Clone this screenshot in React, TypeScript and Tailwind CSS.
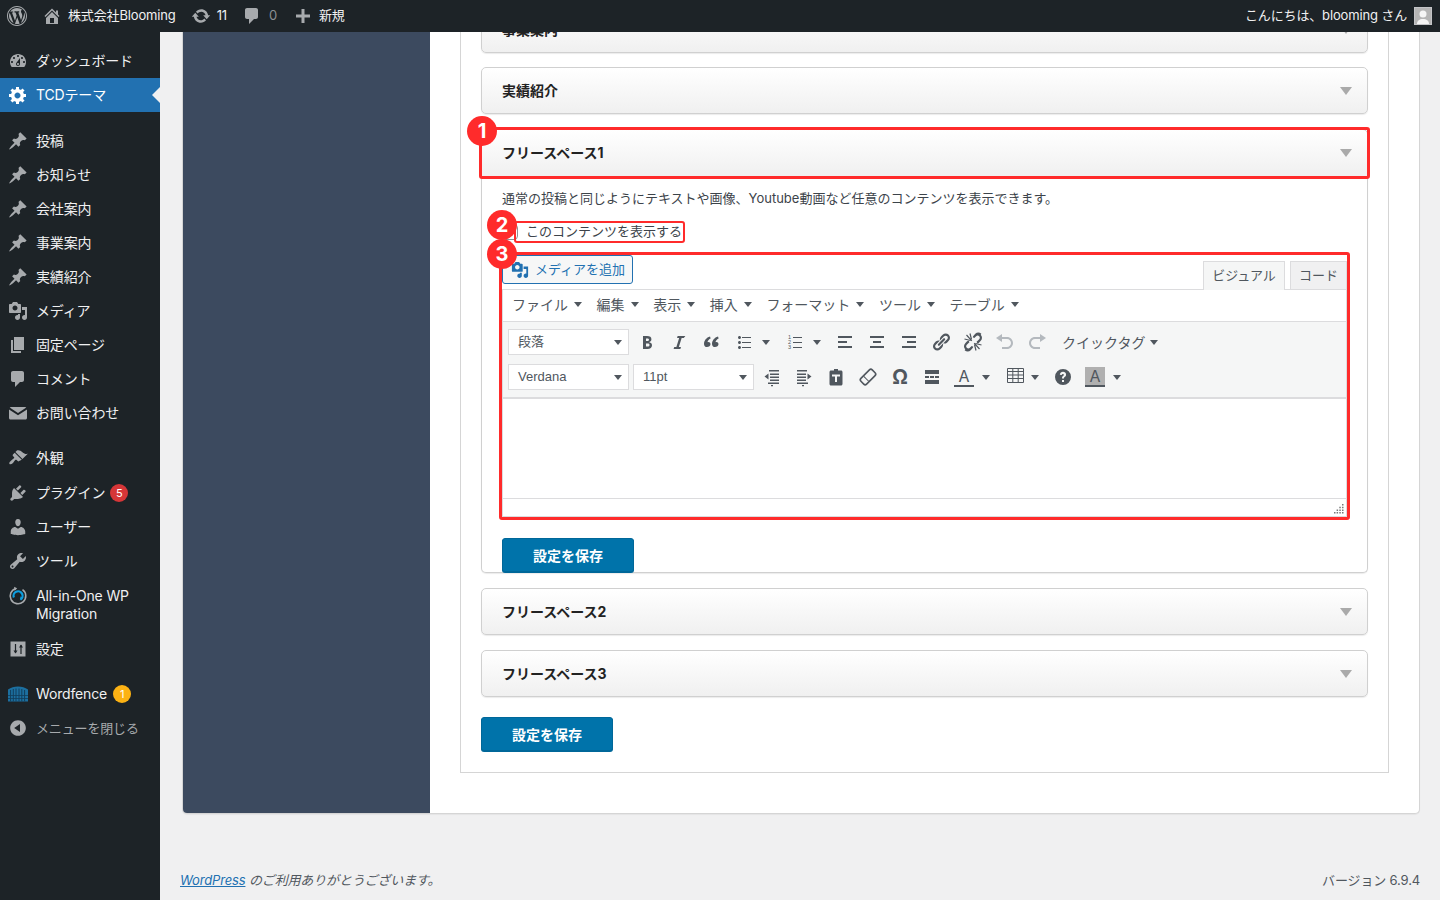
import type { ReactNode } from "react";

const paths = {
  logo: "M20 10c0-5.52-4.48-10-10-10S0 4.48 0 10s4.48 10 10 10 10-4.48 10-10zM10 1.01c4.97 0 8.99 4.02 8.99 8.99s-4.02 8.99-8.99 8.99S1.01 14.97 1.01 10 5.03 1.01 10 1.01zM8.01 14.82L4.96 6.61c.49-.03 1.05-.08 1.05-.08.43-.05.38-1.01-.06-.99 0 0-1.29.1-2.13.1-.15 0-.33 0-.52-.01 1.44-2.17 3.9-3.6 6.7-3.6 2.09 0 3.99.79 5.41 2.09-.6-.08-1.45.35-1.45 1.42 0 .66.38 1.22.79 1.88.31.54.5 1.22.5 2.21 0 1.34-1.27 4.48-1.27 4.48l-2.71-7.5c.48-.03.75-.16.75-.16.43-.05.38-1.1-.05-1.08 0 0-1.3.11-2.14.11-.78 0-2.11-.11-2.11-.11-.43-.02-.48 1.06-.05 1.08l.84.08 1.12 3.04zm6.02 2.15L16.64 10s.67-1.69.39-3.81c.63 1.14.94 2.42.94 3.81 0 2.96-1.56 5.58-3.94 6.97zM2.68 6.77L6.5 16.96C3.81 15.66 2.01 12.91 2.01 10c0-1.16.2-2.24.67-3.23zm7.56 4.53l2.3 6.26c.01.04.03.08.05.11-.78.27-1.62.43-2.5.43-.74 0-1.46-.11-2.14-.32z",
  home: "M16 8.5l1.53 1.53-1.06 1.06L10 4.62l-6.47 6.47-1.06-1.06L10 2.5l4 4v-2h2v4zm-6-2.46l6 5.99V18H4v-5.97zM12 17v-5H8v5h4z",
  update: "M10.2 3.28c3.53 0 6.43 2.61 6.92 6h2.08l-3.5 4-3.5-4h2.32c-.45-1.97-2.21-3.45-4.32-3.45-1.45 0-2.73.71-3.54 1.78L4.95 5.66C6.23 4.2 8.11 3.28 10.2 3.28zm-.4 13.44c-3.52 0-6.43-2.61-6.92-6H.8l3.5-4c1.17 1.33 2.33 2.67 3.5 4H5.48c.45 1.97 2.21 3.45 4.32 3.45 1.45 0 2.73-.71 3.54-1.78l1.71 1.95c-1.28 1.46-3.15 2.38-5.25 2.38z",
  comment: "M5 2h9c1.1 0 2 .9 2 2v7c0 1.1-.9 2-2 2h-2l-5 5v-5H5c-1.1 0-2-.9-2-2V4c0-1.1.9-2 2-2z",
  plus: "M8.5 3h3v5.5H17v3h-5.5V17h-3v-5.5H3v-3h5.5z",
  dashboard: "M3.76 16h12.48c1.1-1.37 1.76-3.11 1.76-5 0-4.42-3.58-8-8-8s-8 3.58-8 8c0 1.89.66 3.63 1.76 5zM10 4c.55 0 1 .45 1 1s-.45 1-1 1-1-.45-1-1 .45-1 1-1zM6 6c.55 0 1 .45 1 1s-.45 1-1 1-1-.45-1-1 .45-1 1-1zm8 0c.55 0 1 .45 1 1s-.45 1-1 1-1-.45-1-1 .45-1 1-1zm-5.37 5.55L12 7v6c0 1.1-.9 2-2 2s-2-.9-2-2c0-.57.24-1.08.63-1.45zM4 10c.55 0 1 .45 1 1s-.45 1-1 1-1-.45-1-1 .45-1 1-1zm12 0c.55 0 1 .45 1 1s-.45 1-1 1-1-.45-1-1 .45-1 1-1zm-5 3c0-.55-.45-1-1-1s-1 .45-1 1 .45 1 1 1 1-.45 1-1z",
  gear: "M18 12h-2.18c-.17.7-.44 1.35-.81 1.93l1.54 1.54-2.1 2.1-1.54-1.54c-.58.36-1.23.63-1.91.79V19H8v-2.18c-.68-.16-1.33-.43-1.91-.79l-1.54 1.54-2.12-2.12 1.54-1.54c-.36-.58-.63-1.23-.79-1.91H1V9.03h2.17c.16-.7.44-1.35.8-1.94L2.43 5.55l2.1-2.1 1.54 1.54c.58-.37 1.24-.64 1.93-.81V2h3v2.18c.68.16 1.33.43 1.91.79l1.54-1.54 2.12 2.12-1.54 1.54c.36.59.64 1.24.8 1.94H18V12zm-8.5 1.5c1.66 0 3-1.34 3-3s-1.34-3-3-3-3 1.34-3 3 1.34 3 3 3z",
  pin: "M10.44 3.02l1.82-1.82 6.36 6.35-1.83 1.82c-1.05-.68-2.48-.57-3.41.36l-.75.75c-.92.93-1.04 2.35-.35 3.41l-1.83 1.82-2.41-2.41-2.8 2.79c-.42.42-3.38 2.71-3.8 2.29s1.86-3.39 2.28-3.81l2.79-2.79L4.1 9.36l1.83-1.82c1.05.69 2.48.57 3.4-.36l.75-.75c.93-.92 1.05-2.35.36-3.41z",
  media: "M13 11V4c0-.55-.45-1-1-1h-1.67L9 1H5L3.67 3H2c-.55 0-1 .45-1 1v7c0 .55.45 1 1 1h10c.55 0 1-.45 1-1zM7 4.5c1.38 0 2.5 1.12 2.5 2.5S8.38 9.5 7 9.5 4.5 8.38 4.5 7 5.62 4.5 7 4.5zM14 6h5v10.5c0 1.38-1.12 2.5-2.5 2.5S14 17.88 14 16.5s1.12-2.5 2.5-2.5c.17 0 .34.02.5.05V9h-3V6zm-4 8.05V13h2v3.5c0 1.38-1.12 2.5-2.5 2.5S7 17.88 7 16.5 8.12 14 9.5 14c.17 0 .34.02.5.05z",
  page: "M6 15V2h10v13H6zm-1 1h8v2H3V5h2v11z",
  mail: "M3 4h14c.6 0 1 .2 1.300.6L10 10 1.700 4.600C2 4.200 2.400 4 3 4zM1 6.500l9 5.800 9-5.800V15c0 .8-.7 1.500-1.500 1.500h-15C1.700 16.500 1 15.800 1 15z",
  brush: "M14.48 11.06L7.41 3.99l1.5-1.5c.5-.56 2.3-.47 3.51.32 1.21.8 1.43 1.28 2.91 2.1 1.18.64 2.45 1.26 4.45.85zm-.71.71L6.7 4.7 4.93 6.47c-.39.39-.39 1.02 0 1.41l1.06 1.06c.39.39.39 1.03 0 1.42-.6.6-1.43 1.11-2.21 1.69-.35.26-.7.53-1.01.84C1.43 13.71.96 15.12 1.5 15.89c.52.73 2.1.43 3.2-.64.31-.31.58-.66.84-1.01.58-.78 1.09-1.61 1.69-2.21.39-.39 1.02-.39 1.41 0l1.06 1.06c.39.39 1.02.39 1.41 0z",
  plugin: "M13.11 4.36L9.87 7.6 8 5.73l3.24-3.24c.35-.34 1.05-.2 1.56.32.52.51.66 1.21.31 1.55zm-8 1.77l.91-1.12 9.01 9.01-1.19.84c-.71.71-2.63 1.16-3.82 1.16H6.14L4.9 17.26c-.59.59-1.54.59-2.12 0-.59-.58-.59-1.53 0-2.12l1.24-1.24v-3.88c0-1.13.4-3.19 1.09-3.89zm7.26 3.97l3.24-3.24c.34-.35 1.04-.21 1.55.31.52.51.66 1.21.31 1.55l-3.24 3.25z",
  users: "M10 9.25c-2.27 0-2.73-3.44-2.73-3.44C7 4.02 7.82 2 9.97 2c2.16 0 2.98 2.02 2.71 3.81 0 0-.41 3.44-2.68 3.44zm0 2.57L12.72 10c2.39 0 4.52 2.33 4.52 4.53v2.49s-3.65 1.13-7.24 1.13c-3.65 0-7.24-1.13-7.24-1.13v-2.49c0-2.25 1.94-4.48 4.47-4.48z",
  tools: "M16.68 9.77c-1.34 1.34-3.3 1.67-4.95.99l-5.41 6.52c-.99.99-2.59.99-3.58 0s-.99-2.59 0-3.57l6.52-5.42c-.68-1.65-.35-3.61.99-4.95 1.28-1.28 3.12-1.62 4.72-1.06l-2.89 2.89 2.82 2.82 2.86-2.87c.53 1.58.18 3.39-1.08 4.65zM3.81 16.21c.4.39 1.04.39 1.43 0 .4-.4.4-1.04 0-1.43-.39-.4-1.03-.4-1.43 0-.39.39-.39 1.03 0 1.43z",
  collapse: "M10 2.16c4.33 0 7.84 3.51 7.84 7.84s-3.51 7.84-7.84 7.84S2.16 14.33 2.16 10C2.16 5.71 5.71 2.16 10 2.16zm2 11.72V6.12L6.18 9.97z",
  bold: "M6 4v13h4.54c1.37 0 2.46-.33 3.26-1 .8-.66 1.2-1.58 1.2-2.77 0-.84-.23-1.51-.68-2.01-.45-.5-1.12-.84-2.01-1.01v-.13c.73-.17 1.27-.5 1.6-1 .33-.49.5-1.11.5-1.86 0-1.06-.36-1.88-1.08-2.42C12.61 4.27 11.49 4 10 4H6zm3 5V6.5h1c1.3 0 2 .39 2 1.21 0 .86-.68 1.29-2 1.29H9zm0 5.5v-3h1.5c1.4 0 2 .5 2 1.46 0 1.04-.65 1.54-2 1.54H9z",
  italic: "M14.78 6h-2.13l-2.8 9h2.12l-.62 2H4.6l.62-2h2.14l2.8-9H8.03l.62-2h7.75z",
  quote: "M9.49 12.22c0-1.24-.88-2.18-2.23-2.18-.38 0-.6.04-.8.1.32-1.46 1.72-3.04 3.19-3.65L9.01 4.500C5.440 5.500 3 8.600 3 11.930 3 14 4.270 15 5.920 15c2.060 0 3.570-1.220 3.570-2.780zm8 0c0-1.240-.880-2.180-2.230-2.180-.380 0-.6.040-.8.1.320-1.460 1.720-3.040 3.190-3.650L17.010 4.500C13.440 5.500 11 8.600 11 11.930 11 14 12.270 15 13.920 15c2.060 0 3.570-1.220 3.570-2.780z",
  ul: "M5.5 7C4.67 7 4 6.33 4 5.5 4 4.68 4.67 4 5.5 4 6.32 4 7 4.68 7 5.5 7 6.33 6.32 7 5.5 7zM8 5h9v1H8V5zm-2.5 7c-.83 0-1.5-.67-1.5-1.5C4 9.68 4.67 9 5.5 9c.82 0 1.5.68 1.5 1.5 0 .83-.68 1.5-1.5 1.5zM8 10h9v1H8v-1zm-2.5 7c-.83 0-1.5-.67-1.5-1.5 0-.82.67-1.5 1.5-1.5.82 0 1.5.68 1.5 1.5 0 .83-.68 1.5-1.5 1.5zM8 15h9v1H8v-1z",
  alignLeft: "M3 4h14v2H3zM3 9h9v2H3zM3 14h14v2H3z",
  alignCenter: "M3 4h14v2H3zM6 9h8v2H6zM3 14h14v2H3z",
  alignRight: "M3 4h14v2H3zM8 9h9v2H8zM3 14h14v2H3z",
  link: "M17.74 2.76c1.68 1.69 1.68 4.41 0 6.1l-1.53 1.52c-1.12 1.12-2.7 1.47-4.14 1.09l2.62-2.61.76-.77.76-.76c.84-.84.84-2.2 0-3.04-.84-.85-2.2-.85-3.04 0l-.77.76-3.38 3.38c-.37-1.44-.02-3.02 1.1-4.14l1.52-1.53c1.69-1.68 4.42-1.68 6.1 0zM8.59 13.43l5.34-5.34c.42-.42.42-1.1 0-1.52-.44-.43-1.13-.39-1.53 0l-5.33 5.34c-.42.42-.42 1.1 0 1.52.44.43 1.13.39 1.52 0zm-.76 2.29l4.14-4.15c.38 1.44.03 3.02-1.09 4.14l-1.52 1.53c-1.69 1.68-4.41 1.68-6.1 0-1.68-1.68-1.68-4.42 0-6.1l1.53-1.52c1.12-1.12 2.7-1.47 4.14-1.1l-4.14 4.15c-.85.84-.85 2.2 0 3.05.84.84 2.2.84 3.04 0z",
  unlink: "M17.74 2.76c1.68 1.69 1.68 4.41 0 6.1l-1.53 1.52c-.5.5-1.1.85-1.75 1.03l-.9-1.55 1.1-1.1.76-.77.76-.76c.84-.84.84-2.2 0-3.04-.84-.85-2.2-.85-3.04 0l-.77.76-1.1 1.1-1.55-.9c.18-.65.53-1.25 1.03-1.75l1.52-1.53c1.69-1.68 4.42-1.68 6.1 0zM2.26 17.24c-1.68-1.68-1.68-4.42 0-6.1l1.53-1.52c.5-.5 1.1-.85 1.75-1.03l.9 1.55-1.1 1.1-.76.77-.76.76c-.84.84-.84 2.2 0 3.04.84.85 2.2.85 3.04 0l.77-.76 1.1-1.1 1.55.9c-.18.65-.53 1.25-1.03 1.75l-1.52 1.53c-1.69 1.68-4.42 1.68-6.1 0z",
  undo: "M12 5H7V2L1 6l6 4V7h5c2.2 0 4 1.8 4 4s-1.8 4-4 4H7v2h5c3.3 0 6-2.7 6-6s-2.7-6-6-6z",
  redo: "M8 5h5V2l6 4-6 4V7H8c-2.2 0-4 1.8-4 4s1.8 4 4 4h5v2H8c-3.3 0-6-2.7-6-6s2.7-6 6-6z",
  outdent: "M7 3h10v1.600H7zM2.500 9.500L6.500 6.500v6zM8 6.500h9V8H8zM8 9.500h9V11H8zM8 12.500h9V14H8zM6 15.500h11v1.500H6zM9 18h2v1.200H9z",
  indent: "M3 3h10v1.600H3zM17.500 9.500L13.500 6.500v6zM3 6.500h9V8H3zM3 9.500h9V11H3zM3 12.500h9V14H3zM3 15.500h11v1.500H3zM8 18h2v1.200H8z",
  paste: "M12 2v1.500h3c.8 0 1.500.7 1.500 1.500v12c0 .8-.7 1.500-1.500 1.500H5c-.8 0-1.500-.7-1.500-1.500V5c0-.8.7-1.500 1.500-1.500h3V2zM6 7.500v2h3V15h2V9.500h3v-2z",
  hr: "M3 3h14v4H3zM3 9h4v2H3zM8 9h4v2H8zM13 9h4v2h-4zM3 13h14v4H3z",
  help: "M10 2a8 8 0 1 0 0 16 8 8 0 0 0 0-16zm1 13H9v-2h2zm1.900-6.300c-.3.5-.8.900-1.300 1.300-.4.300-.6.500-.6 1v.5H9v-.7c0-.9.4-1.400 1-1.800.5-.4.9-.7.900-1.200 0-.5-.4-.8-1-.8-.7 0-1.100.4-1.200 1.100l-1.900-.3C7.100 5.700 8.300 4.800 10 4.800c1.800 0 3 1 3 2.500 0 .5 0 1-.1 1.400z",
};

type IconName = keyof typeof paths;

function Dash({ name, size = 20, className = "" }: { name: IconName; size?: number; className?: string }) {
  return (
    <svg className={`block shrink-0 ${className}`} width={size} height={size} viewBox="0 0 20 20" fill="currentColor">
      <path d={paths[name]} />
    </svg>
  );
}

function Caret({ className = "text-[#50575e]" }: { className?: string }) {
  return (
    <svg className={`block shrink-0 ${className}`} width="8" height="5" viewBox="0 0 8 5" fill="currentColor">
      <path d="M0 0h8L4 5z" />
    </svg>
  );
}

function MigrationIcon() {
  return (
    <svg width="20" height="20" viewBox="0 0 20 20" fill="none" className="block shrink-0">
      <path d="M8 2.400A7.800 7.800 0 1 0 14.500 3.600" stroke="#a7aaad" strokeWidth="1.600" />
      <path d="M6 .8l3.200 1.500L6.600 4.700z" fill="#a7aaad" />
      <path d="M5.900 11.500A4.500 4.500 0 1 1 12.400 13.600" stroke="#0e9fe0" strokeWidth="2.200" />
      <path d="M12.300 10.400l3.200 1.200-3 2.400z" fill="#0e9fe0" />
    </svg>
  );
}

function FenceIcon() {
  return (
    <svg width="20" height="16" viewBox="0 0 20 16" className="block shrink-0">
      <path d="M0 3.500C3 1.500 6 .5 10 .5s7 1 10 3V15.500H0z" fill="#1c6f9f" />
      <path d="M2.600 4v11.500M5.300 3v12.500M8 2.500v13M11 2.500v13M13.800 3v12.500M16.600 4v11.500" stroke="#123f5c" strokeWidth="1" />
      <path d="M0 9.500h20M0 12.500h20" stroke="#123f5c" strokeWidth=".8" />
    </svg>
  );
}

function SettingsIcon() {
  return (
    <svg width="20" height="20" viewBox="0 0 20 20" className="block shrink-0">
      <path d="M2.500 2.500h15v15h-15z" fill="#a7aaad" />
      <path d="M7.500 5v9M13 6v9" stroke="#1d2327" strokeWidth="1.200" />
      <path d="M5.500 11.500h4l-2 3zM11 8.500h4l-2-3z" fill="#1d2327" />
    </svg>
  );
}

function UnlinkIcon() {
  return (
    <svg width="20" height="20" viewBox="0 0 20 20" fill="currentColor" className="block shrink-0">
      <path d={paths.unlink} />
      <path d="M8.800 8.800L3.500 3M8.500 7.500L7 1.500M7.500 8.500L1.500 7M11.200 11.200L16.500 17M11.500 12.500L13 18.500M12.500 11.500L18.500 13" stroke="currentColor" strokeWidth="1.200" fill="none" />
    </svg>
  );
}

function EraserIcon() {
  return (
    <svg width="20" height="20" viewBox="0 0 20 20" fill="none" stroke="currentColor" className="block shrink-0">
      <g transform="rotate(-45 10 10)">
        <rect x="2" y="6" width="16" height="8" rx="2" strokeWidth="1.600" />
        <path d="M7.500 6.500v7" strokeWidth="1" />
      </g>
    </svg>
  );
}

type MenuItem = {
  label: ReactNode;
  icon: ReactNode;
  top?: string;
  active?: boolean;
  badge?: string;
  badgeColor?: string;
  dim?: boolean;
  iconTop?: boolean;
};

const menu: MenuItem[] = [
  { label: "ダッシュボード", icon: <Dash name="dashboard" /> },
  { label: "TCDテーマ", icon: <Dash name="gear" className="text-white" />, active: true },
  { label: "投稿", icon: <Dash name="pin" />, top: "mt-3" },
  { label: "お知らせ", icon: <Dash name="pin" /> },
  { label: "会社案内", icon: <Dash name="pin" /> },
  { label: "事業案内", icon: <Dash name="pin" /> },
  { label: "実績紹介", icon: <Dash name="pin" /> },
  { label: "メディア", icon: <Dash name="media" /> },
  { label: "固定ページ", icon: <Dash name="page" /> },
  { label: "コメント", icon: <Dash name="comment" /> },
  { label: "お問い合わせ", icon: <Dash name="mail" /> },
  { label: "外観", icon: <Dash name="brush" />, top: "mt-[11px]" },
  { label: "プラグイン", icon: <Dash name="plugin" />, top: "mt-px", badge: "5", badgeColor: "bg-[#d63638] -ml-[1px]" },
  { label: "ユーザー", icon: <Dash name="users" /> },
  { label: "ツール", icon: <Dash name="tools" /> },
  { label: <>All-in-One WP<br />Migration</>, icon: <MigrationIcon />, top: "mt-px", iconTop: true },
  { label: "設定", icon: <SettingsIcon />, top: "mt-px" },
  { label: "Wordfence", icon: <FenceIcon />, top: "mt-[11px]", badge: "1", badgeColor: "bg-[#fcb214]" },
  { label: "メニューを閉じる", icon: <Dash name="collapse" />, dim: true },
];

function SideItem({ item }: { item: MenuItem }) {
  return (
    <div
      className={`relative flex min-h-[34px] items-center leading-[18px] ${item.dim ? "text-[13px]" : "text-[14px]"} ${item.top ?? ""} ${
        item.active ? "bg-[#2271b1] text-white" : item.dim ? "text-[#a7aaad]" : "text-[#f0f0f1]"
      }`}
    >
      <div className={`flex w-[36px] shrink-0 justify-center text-[#a7aaad] ${item.iconTop ? "-mt-[18px]" : ""}`}>{item.icon}</div>
      <div className="flex items-center gap-[6px] py-2">
        <span>{item.label}</span>
        {item.badge && (
          <span className={`flex h-[18px] w-[18px] items-center justify-center rounded-full text-[11px] text-white ${item.badgeColor}`}>
            {item.badge}
          </span>
        )}
      </div>
      {item.active && (
        <span className="absolute right-0 top-1/2 h-0 w-0 -translate-y-1/2 border-y-[8px] border-r-[8px] border-y-transparent border-r-[#f0f0f1]" />
      )}
    </div>
  );
}

function Sidebar() {
  return (
    <aside className="w-40 shrink-0 bg-[#1d2327] pt-3 tracking-[-0.15px]">
      {menu.map((item, i) => (
        <SideItem key={i} item={item} />
      ))}
    </aside>
  );
}

function TopBar() {
  return (
    <header className="relative z-20 flex h-8 shrink-0 items-center justify-between bg-[#1d2327] text-[13px] tracking-[-0.15px] text-[#f0f0f1]">
      <div className="flex items-center">
        <div className="ml-[7px] text-[#a7aaad]"><Dash name="logo" /></div>
        <div className="ml-[15px] text-[#a7aaad]"><Dash name="home" /></div>
        <span className="ml-[6px]">株式会社Blooming</span>
        <div className="ml-[15px] text-[#a7aaad]"><Dash name="update" /></div>
        <span className="ml-[6px]">11</span>
        <div className="ml-[15px] text-[#a7aaad]"><Dash name="comment" /></div>
        <span className="ml-[7px] text-[#8c8f94]">0</span>
        <div className="ml-[16px] text-[#a7aaad]"><Dash name="plus" /></div>
        <span className="ml-[6px]">新規</span>
      </div>
      <div className="flex items-center gap-[7px] pr-2">
        <span>こんにちは、blooming さん</span>
        <div className="flex h-[18px] w-[18px] items-end justify-center overflow-hidden border border-[#c3c4c7] bg-[#b5b5b5]">
          <svg width="16" height="16" viewBox="0 0 16 16" fill="#f5f5f5" className="block">
            <circle cx="8" cy="6" r="3.500" />
            <path d="M2 16c0-3.500 2.500-5 6-5s6 1.500 6 5z" />
          </svg>
        </div>
      </div>
    </header>
  );
}

function Marker({ n, className }: { n: number; className: string }) {
  return (
    <span className={`absolute z-10 flex h-[30px] w-[30px] items-center justify-center rounded-full bg-[#ff2b2b] text-[20px] font-bold text-white ${className}`}>
      {n}
    </span>
  );
}

function Chevron() {
  return (
    <svg width="12" height="8" viewBox="0 0 12 8" fill="#aaaaaa" className="block shrink-0">
      <path d="M0 0h12L6 8z" />
    </svg>
  );
}

function AccordionHead({ title, open = false, className = "" }: { title: string; open?: boolean; className?: string }) {
  return (
    <div
      className={`flex items-center justify-between border border-[#d0d0d0] bg-gradient-to-b from-white to-[#f0f0f0] pl-[20px] pr-[15px] text-[14px] font-bold text-[#222222] shadow-[0_1px_1px_rgba(0,0,0,0.08)] ${
        open ? "h-[48px] rounded-t-[5px] pb-px" : "h-[47px] rounded-[5px]"
      } ${className}`}
    >
      <span>{title}</span>
      <Chevron />
    </div>
  );
}

function SaveButton({ className = "" }: { className?: string }) {
  return (
    <button className={`flex h-[34px] w-[132px] items-center justify-center rounded-[3px] border border-[#006799] bg-[#0073aa] text-[14px] font-bold text-white shadow-[0_1px_0_#006799] ${className}`}>
      設定を保存
    </button>
  );
}

function ToolBtn({ children, className = "w-8", muted = false }: { children: ReactNode; className?: string; muted?: boolean }) {
  return (
    <div className={`flex h-[30px] shrink-0 items-center justify-center ${muted ? "text-[#b4b9be]" : "text-[#50575e]"} ${className}`}>
      {children}
    </div>
  );
}

function SplitBtn({ children, className, pad }: { children: ReactNode; className: string; pad: string }) {
  return (
    <div className={`flex h-[30px] shrink-0 items-center text-[#50575e] ${pad} ${className}`}>
      {children}
    </div>
  );
}

function SelectBox({ label, className = "w-[121px]" }: { label: string; className?: string }) {
  return (
    <div className={`flex h-[26px] shrink-0 items-center justify-between border border-[#dcdcde] bg-white pl-[9px] pr-[6px] font-['Liberation_Sans','Noto_Sans_CJK_JP',sans-serif] text-[13px] text-[#50575e] ${className}`}>
      <span>{label}</span>
      <Caret />
    </div>
  );
}

function OlIcon() {
  return (
    <svg width="20" height="20" viewBox="0 0 20 20" fill="currentColor" className="block shrink-0">
      <path d="M8 5h9v1H8zM8 10h9v1H8zM8 15h9v1H8z" />
      <text x="3" y="7" fontSize="5.500" fontFamily="'Liberation Sans', sans-serif">1</text>
      <text x="3" y="12" fontSize="5.500" fontFamily="'Liberation Sans', sans-serif">2</text>
      <text x="3" y="17" fontSize="5.500" fontFamily="'Liberation Sans', sans-serif">3</text>
    </svg>
  );
}

function TableIcon() {
  return (
    <svg width="17" height="15" viewBox="0 0 17 15" fill="none" stroke="currentColor" className="block shrink-0">
      <path d="M.5.500h16v14H.5zM.5 3.500h16M.5 7h16M.5 10.500h16M5.800 .5v14M11.200 .5v14" strokeWidth="1" />
    </svg>
  );
}

const editorMenu = ["ファイル", "編集", "表示", "挿入", "フォーマット", "ツール", "テーブル"];

function Editor() {
  return (
    <div className="relative">
      <div className="absolute -bottom-[3px] -left-[3px] -right-[3px] -top-[3px] z-10 rounded-[3px] border-[3px] border-[#ff2b2b] pointer-events-none" />
      <Marker n={3} className="-left-[15px] -top-[16px]" />
      <div className="flex h-[34px] items-start justify-between">
        <button className="flex h-[29px] w-[131px] items-center gap-[6px] rounded-[3px] border border-[#2271b1] bg-[#f6f7f7] pl-[8px] text-[13px] text-[#2271b1]">
          <Dash name="media" size={18} />
          <span>メディアを追加</span>
        </button>
        <div className="flex h-full items-end gap-[5px] text-[13px] text-[#50575e]">
          <div className="relative top-px flex h-[29px] w-[82px] items-center justify-center border border-b-0 border-[#dcdcde] bg-[#f5f6f6]">ビジュアル</div>
          <div className="flex h-[28px] w-[57px] items-center justify-center border border-b-0 border-[#dcdcde] bg-[#f0f0f1]">コード</div>
        </div>
      </div>
      <div className="border border-[#dcdcde] bg-white">
        <div className="flex h-[32px] items-center gap-[14.6px] border-b border-[#dcdcde] pb-[2px] pl-[9px] text-[14px] text-[#50575e]">
          {editorMenu.map((m) => (
            <div key={m} className="flex items-center gap-[6px]">
              <span>{m}</span>
              <Caret />
            </div>
          ))}
        </div>
        <div className="flex h-[77px] flex-col gap-[5px] border-b-2 border-[#dcdcde] bg-[#f5f6f6] pl-[5px] pt-[5px]">
          <div className="flex h-[30px] items-center">
            <SelectBox label="段落" />
            <div className="w-[2px] shrink-0" />
            <ToolBtn><Dash name="bold" /></ToolBtn>
            <ToolBtn><Dash name="italic" /></ToolBtn>
            <ToolBtn><Dash name="quote" /></ToolBtn>
            <SplitBtn pad="pl-[7px] gap-[8px]" className="w-[52px]"><Dash name="ul" /><Caret /></SplitBtn>
            <SplitBtn pad="pl-[6px] gap-[8px]" className="w-[50px]"><OlIcon /><Caret /></SplitBtn>
            <ToolBtn><Dash name="alignLeft" /></ToolBtn>
            <ToolBtn><Dash name="alignCenter" /></ToolBtn>
            <ToolBtn><Dash name="alignRight" /></ToolBtn>
            <ToolBtn><Dash name="link" /></ToolBtn>
            <ToolBtn><UnlinkIcon /></ToolBtn>
            <ToolBtn muted><Dash name="undo" /></ToolBtn>
            <ToolBtn muted><Dash name="redo" /></ToolBtn>
            <div className="ml-[9px] flex items-center gap-[5px] text-[14px] text-[#50575e]">
              <span>クイックタグ</span>
              <Caret />
            </div>
          </div>
          <div className="flex h-[30px] items-center">
            <SelectBox label="Verdana" />
            <div className="w-1 shrink-0" />
            <SelectBox label="11pt" />
            <ToolBtn className="ml-px w-[33px]"><Dash name="outdent" /></ToolBtn>
            <ToolBtn><Dash name="indent" /></ToolBtn>
            <ToolBtn><Dash name="paste" /></ToolBtn>
            <ToolBtn><EraserIcon /></ToolBtn>
            <ToolBtn className="w-8 text-[20px] font-bold leading-none">Ω</ToolBtn>
            <ToolBtn><Dash name="hr" /></ToolBtn>
            <SplitBtn pad="pl-[6px] gap-[8px]" className="w-[50px]">
              <div className="flex h-[20px] w-[20px] flex-col items-center justify-end">
                <span className="text-[16px] leading-[17px]">A</span>
                <span className="h-[2px] w-[20px] bg-[#50575e]" />
              </div>
              <Caret />
            </SplitBtn>
            <SplitBtn pad="pl-[9px] gap-[7px]" className="w-[49px]"><div className="-mt-[4px]"><TableIcon /></div><Caret /></SplitBtn>
            <ToolBtn><Dash name="help" /></ToolBtn>
            <SplitBtn pad="pl-[6px] gap-[8px]" className="w-[50px]">
              <div className="flex h-[20px] w-[20px] flex-col items-center justify-end bg-[#b0b0b0]">
                <span className="text-[16px] leading-[17px]">A</span>
                <span className="h-[2px] w-[20px] bg-[#50575e]" />
              </div>
              <Caret />
            </SplitBtn>
          </div>
        </div>
        <div className="h-[99px]" />
        <div className="relative h-[18px] border-t border-[#dcdcde]">
          <svg width="10" height="10" viewBox="0 0 10 10" fill="#777777" className="absolute bottom-[2px] right-[2px] block">
            <path d="M8 0h1.500v1.500H8zM8 2.700h1.500v1.500H8zM5.300 2.700h1.500v1.500H5.300zM8 5.400h1.500v1.500H8zM5.300 5.400h1.500v1.500H5.300zM2.600 5.400h1.500v1.500H2.600zM8 8.100h1.500v1.500H8zM5.300 8.100h1.500v1.500H5.300zM2.600 8.100h1.500v1.500H2.600zM0 8.100h1.500v1.500H0z" />
          </svg>
        </div>
      </div>
    </div>
  );
}

function OpenPanel() {
  return (
    <div className="mb-[15px]">
      <div className="relative">
        <div className="absolute -inset-[2px] z-10 rounded-[3px] border-[3px] border-[#ff2b2b] pointer-events-none" />
        <Marker n={1} className="-left-[14px] -top-[13px]" />
        <AccordionHead title="フリースペース1" open />
      </div>
      <div className="rounded-b-[5px] border border-t-0 border-[#d0d0d0] bg-white px-5 pt-[11px] shadow-[0_1px_1px_rgba(0,0,0,0.08)]">
        <p className="text-[13px] leading-[20px] text-[#3c434a]">通常の投稿と同じようにテキストや画像、Youtube動画など任意のコンテンツを表示できます。</p>
        <div className="relative mt-[14px] flex h-[20px] items-center gap-[8px] text-[13px] text-[#3c434a]">
          <span className="h-4 w-4 rounded-[4px] border border-[#8c8f94] bg-white" />
          <span className="relative">
            このコンテンツを表示する
            <span className="absolute -left-[12px] -right-[3px] -top-[1px] -bottom-[1px] rounded-[3px] border-[2px] border-[#ff2b2b] pointer-events-none" />
          </span>
          <Marker n={2} className="-left-[15px] -top-[12px]" />
        </div>
        <div className="mt-[13px]">
          <Editor />
        </div>
        <SaveButton className="mt-[21px]" />
      </div>
    </div>
  );
}

export default function App() {
  return (
    <div className="flex h-[900px] w-full flex-col overflow-hidden bg-[#f0f0f1] font-['Inter','Noto_Sans_CJK_JP',sans-serif]">
      <TopBar />
      <div className="flex min-h-0 flex-1">
        <Sidebar />
        <main className="flex min-w-0 flex-1 flex-col overflow-hidden pl-[22px] pr-[20px]">
          <div className="flex h-[782px] shrink-0 overflow-hidden rounded-b-[5px] border border-t-0 border-[#d5d5d5] bg-white shadow-[0_1px_1px_rgba(0,0,0,0.05)]">
            <div className="w-[247px] shrink-0 bg-[#3c4a5f]" />
            <div className="min-w-0 flex-1 px-[30px]">
              <div className="relative border border-t-0 border-[#d5d5d5] px-5 pb-[21px]">
                <div className="-mt-[26px] mb-[14px]">
                  <AccordionHead title="事業案内" />
                </div>
                <AccordionHead title="実績紹介" className="mb-[15px]" />
                <OpenPanel />
                <AccordionHead title="フリースペース2" className="mb-[15px]" />
                <AccordionHead title="フリースペース3" />
                <SaveButton className="mt-[20px]" />
              </div>
            </div>
          </div>
          <footer className="mt-[56px] flex items-center justify-between text-[13px] leading-[20px] tracking-[-0.15px] text-[#50575e]">
            <span className="-ml-[2px] italic">
              <span className="text-[#2271b1] underline">WordPress</span> のご利用ありがとうございます。
            </span>
            <span>バージョン 6.9.4</span>
          </footer>
        </main>
      </div>
    </div>
  );
}
